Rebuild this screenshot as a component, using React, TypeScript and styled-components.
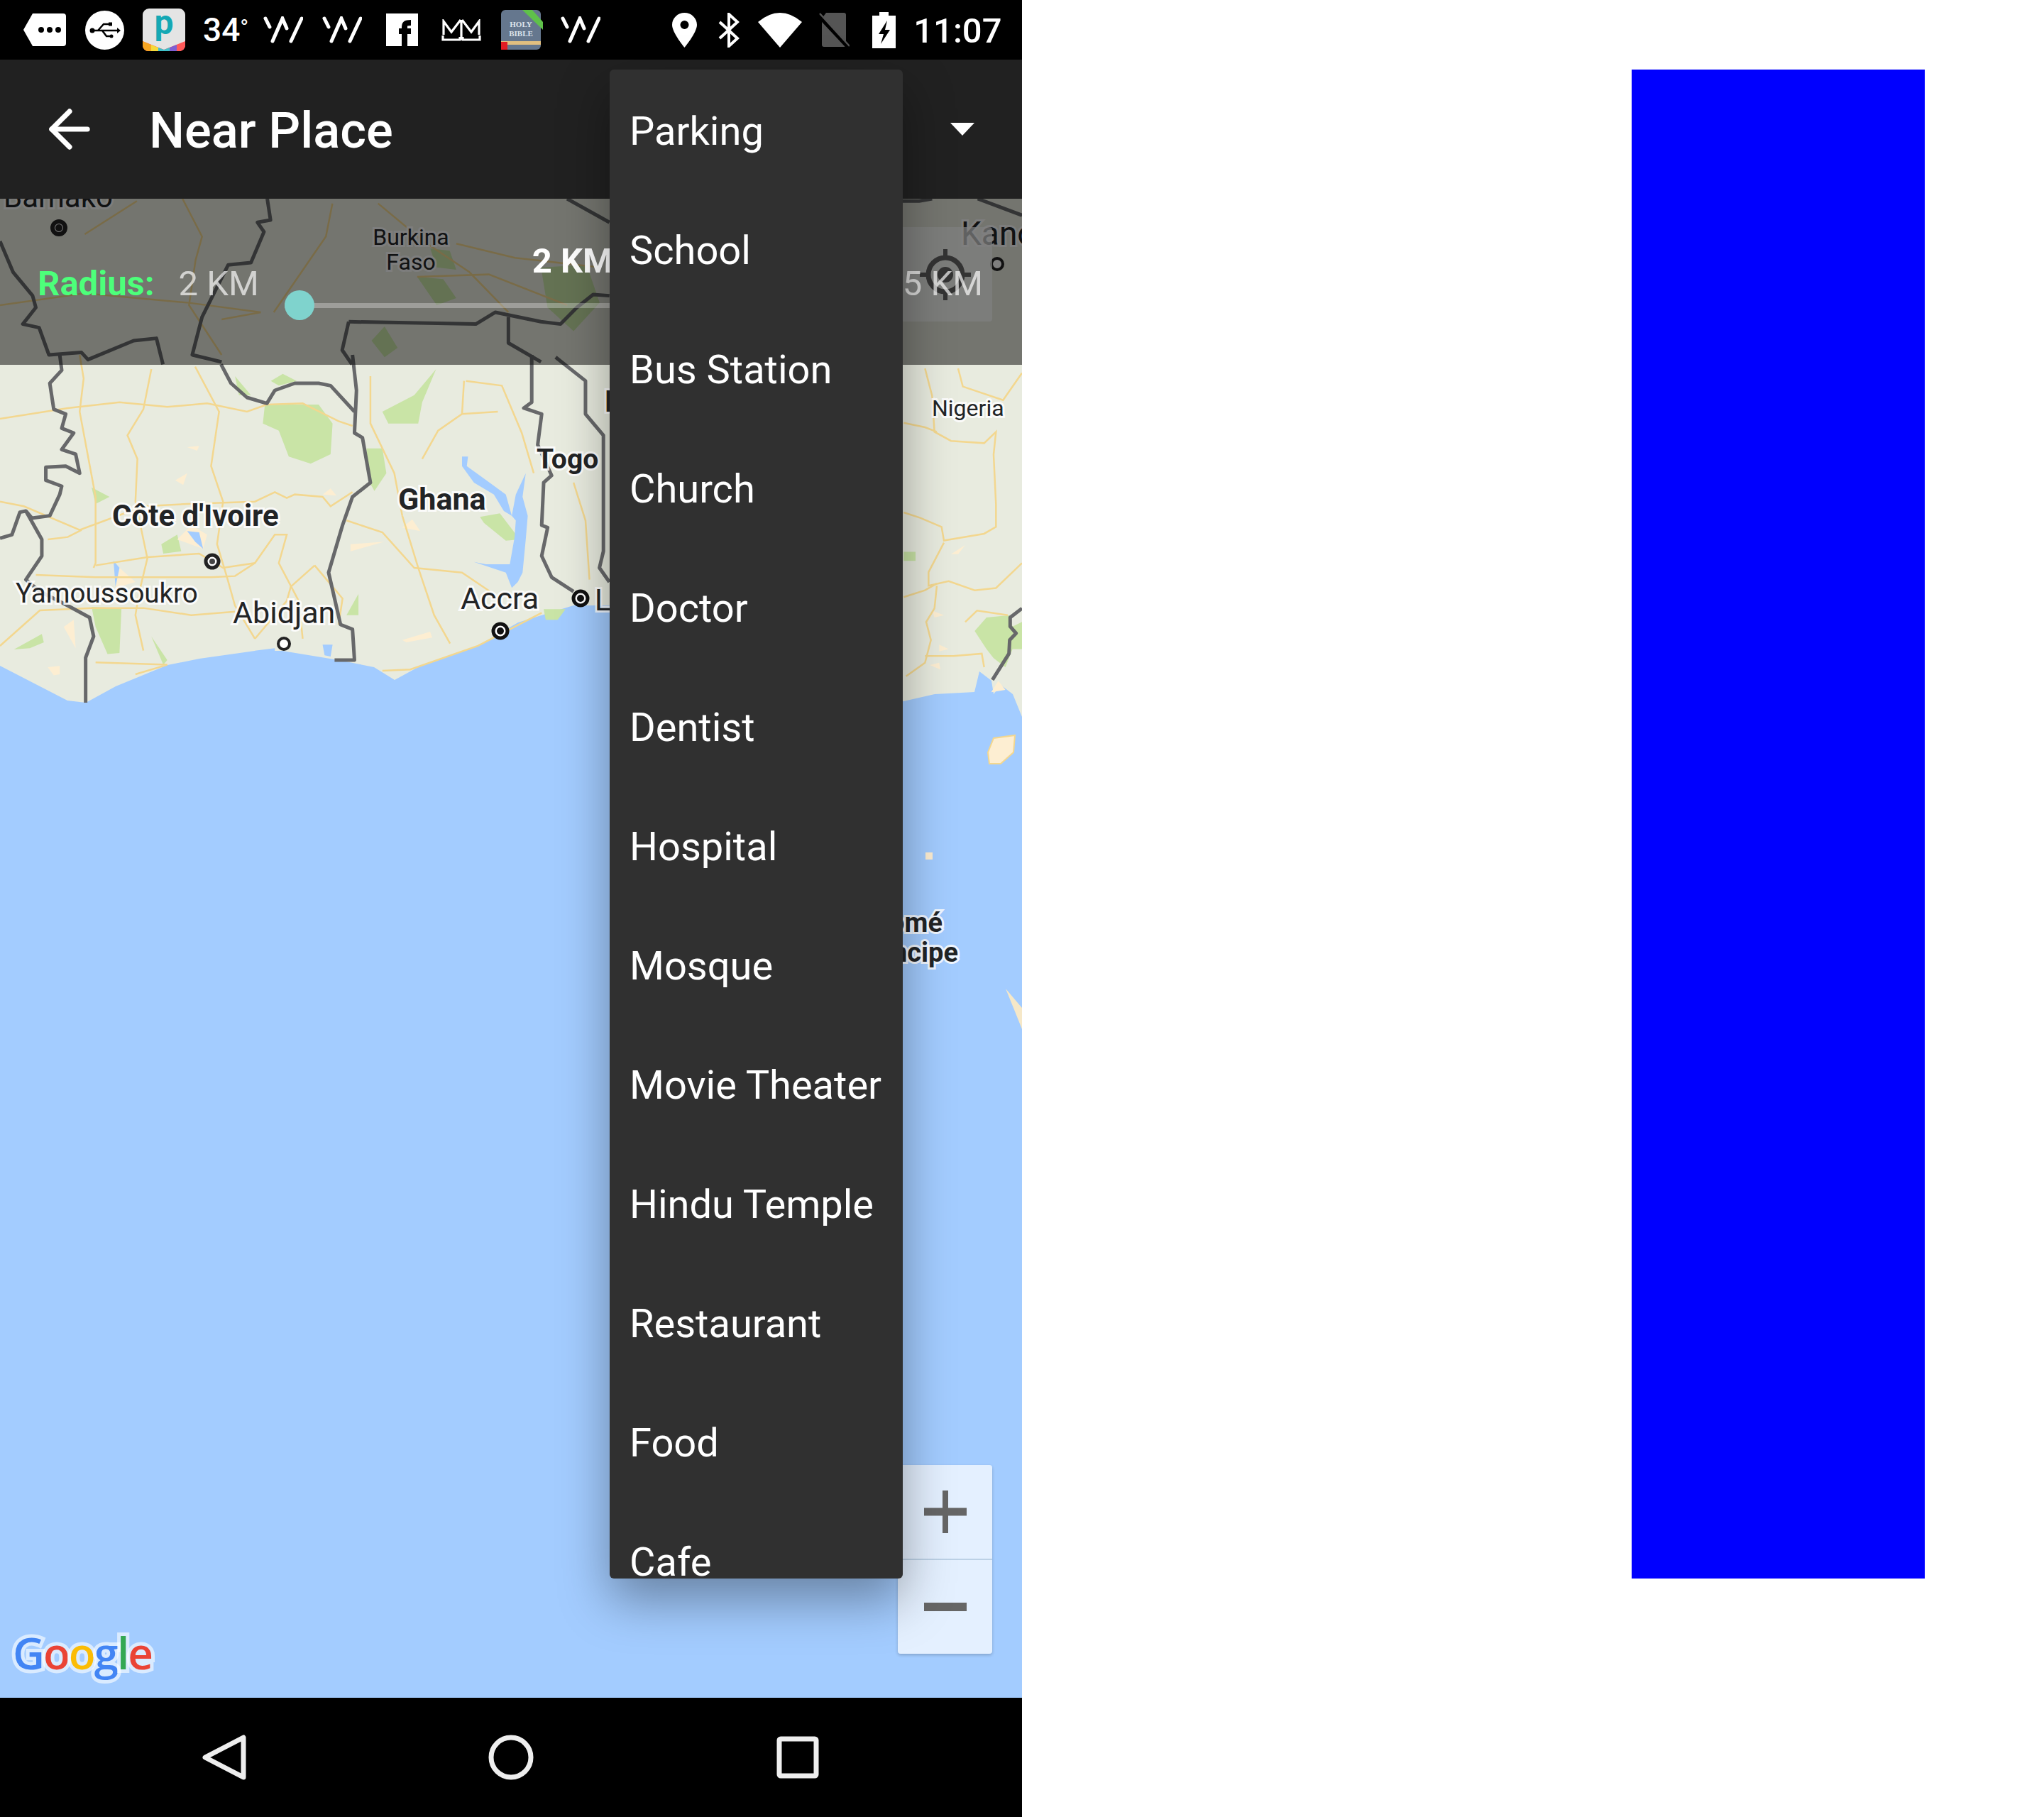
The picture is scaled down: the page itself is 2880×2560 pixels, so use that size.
import React from "react";
import styled, { createGlobalStyle } from "styled-components";
import { ArrowLeft } from "lucide-react";

const GlobalStyle = createGlobalStyle`
  html, body {
    margin: 0;
    padding: 0;
    background: #ffffff;
    font-family: Roboto, "Liberation Sans", sans-serif;
  }
`;

const Page = styled.div`
  display: flex;
  width: 2880px;
  height: 2560px;
  overflow: hidden;
  background: #ffffff;
`;

const Phone = styled.div`
  position: relative;
  display: flex;
  flex-direction: column;
  width: 1440px;
  height: 2560px;
  overflow: hidden;
`;

const StatusBar = styled.div`
  display: flex;
  align-items: center;
  height: 84px;
  flex: none;
  background: #000000;
  color: #ffffff;
`;

const Slot = styled.div<{ $left: number }>`
  display: flex;
  flex: none;
  margin-left: ${(p) => p.$left}px;
`;

const StatusText = styled.span<{ $left: number; $size: number; $weight: number }>`
  margin-left: ${(p) => p.$left}px;
  padding-top: 4px;
  font-size: ${(p) => p.$size}px;
  font-weight: ${(p) => p.$weight};
  line-height: 80px;
  white-space: nowrap;
`;

const Degree = styled.span`
  position: relative;
  top: -8px;
  font-size: 32px;
  font-weight: 400;
`;

const AppBar = styled.div`
  display: flex;
  align-items: center;
  flex: none;
  height: 196px;
  padding: 0 67px 0 55px;
  background: #212121;
  color: #ffffff;
`;

const Title = styled.h1`
  flex: 1;
  margin: 4px 0 0 69px;
  font-size: 70.5px;
  font-weight: 500;
  line-height: 192px;
`;

const Caret = styled.div`
  width: 0;
  height: 0;
  border-left: 17px solid transparent;
  border-right: 17px solid transparent;
  border-top: 18px solid #ffffff;
`;

const MapArea = styled.div`
  position: relative;
  flex: 1;
  background: #a3ccff;
`;

const MapSvg = styled.svg`
  display: block;
  width: 1440px;
  height: 2112px;
`;

const Road = styled.polyline`
  fill: none;
  stroke: #f3d78f;
  stroke-width: 2.5;
  vector-effect: non-scaling-stroke;
`;

const Border = styled.polyline`
  fill: none;
  stroke: #67686a;
  stroke-width: 5;
  stroke-linejoin: round;
  vector-effect: non-scaling-stroke;
`;

const Park = styled.polygon`
  fill: #c9e4a6;
`;

const Patch = styled.polygon`
  fill: #fdeed2;
`;

const Lake = styled.polygon`
  fill: #a3ccff;
`;

const MapLabel = styled.text<{ $size: number; $bold?: boolean }>`
  font-family: Roboto, "Liberation Sans", sans-serif;
  font-size: ${(p) => p.$size}px;
  font-weight: ${(p) => (p.$bold ? 700 : 400)};
  fill: #222426;
  stroke: rgba(255, 255, 255, 0.85);
  stroke-width: 6px;
  paint-order: stroke;
`;

const GoogleMark = styled.text`
  font-family: "Open Sans", Roboto, sans-serif;
  font-size: 62px;
  font-weight: 600;
  letter-spacing: -2px;
  stroke: rgba(255, 255, 255, 0.6);
  stroke-width: 10px;
  paint-order: stroke;
`;

const LocateButton = styled.div`
  position: absolute;
  top: 40px;
  right: 42px;
  display: flex;
  align-items: center;
  justify-content: center;
  width: 133px;
  height: 133px;
  border-radius: 4px;
  background: rgba(255, 255, 255, 0.72);
`;

const ZoomControl = styled.div`
  position: absolute;
  right: 42px;
  bottom: 62px;
  display: flex;
  flex-direction: column;
  width: 133px;
  height: 266px;
  border-radius: 4px;
  background: rgba(255, 255, 255, 0.7);
  box-shadow: 0 2px 4px rgba(0, 0, 0, 0.2);
`;

const ZoomButton = styled.div<{ $divider?: boolean }>`
  display: flex;
  flex: 1;
  align-items: center;
  justify-content: center;
  border-bottom: ${(p) => (p.$divider ? "2px solid rgba(140, 170, 200, 0.45)" : "none")};
`;

const RadiusPanel = styled.div`
  position: absolute;
  top: 0;
  left: 0;
  right: 0;
  display: flex;
  align-items: flex-start;
  height: 234px;
  padding: 0 55px 0 53px;
  box-sizing: border-box;
  background: rgba(0, 0, 0, 0.5);
`;

const RadiusLabel = styled.span`
  margin-top: 90px;
  color: #4dff7a;
  font-size: 49px;
  font-weight: 700;
  line-height: 60px;
`;

const RadiusValue = styled.span<{ $left: number }>`
  margin: 90px 0 0 ${(p) => p.$left}px;
  color: rgba(255, 255, 255, 0.68);
  font-size: 49px;
  line-height: 60px;
  white-space: nowrap;
`;

const Slider = styled.div`
  display: flex;
  flex: 1;
  flex-direction: column;
  align-items: center;
  margin: 58px 59px 0 36px;
`;

const SliderValue = styled.span`
  color: #ffffff;
  font-size: 49px;
  font-weight: 700;
  line-height: 60px;
  white-space: nowrap;
`;

const SliderTrack = styled.div`
  position: relative;
  align-self: stretch;
  height: 7px;
  margin-top: 29px;
  background: rgba(255, 255, 255, 0.3);
`;

const SliderThumb = styled.div`
  position: absolute;
  top: -18px;
  left: 0;
  width: 42px;
  height: 42px;
  border-radius: 50%;
  background: #7fd3cd;
`;

const NavBar = styled.div`
  display: flex;
  align-items: center;
  justify-content: center;
  gap: 340px;
  flex: none;
  height: 168px;
  background: #000000;
`;

const NavIcon = styled.svg`
  display: block;
  width: 64px;
  height: 64px;
  fill: none;
  stroke: #eeeeee;
  stroke-width: 7;
  stroke-linejoin: round;
`;

const Menu = styled.div`
  position: absolute;
  top: 98px;
  left: 859px;
  width: 413px;
  height: 2126px;
  padding-top: 3px;
  box-sizing: border-box;
  overflow: hidden;
  border-radius: 6px;
  background: #303030;
  box-shadow: 0 30px 70px rgba(0, 0, 0, 0.36);
`;

const MenuItem = styled.div`
  flex: none;
  height: 168px;
  padding-left: 28px;
  color: #ffffff;
  font-size: 56px;
  line-height: 168px;
  white-space: nowrap;
`;

const RightSide = styled.div`
  flex: 1;
  padding: 98px 0 0 859px;
  box-sizing: border-box;
`;

const BlueBlock = styled.div`
  width: 413px;
  height: 2126px;
  background: #0000ff;
`;

const items = [
  "Parking",
  "School",
  "Bus Station",
  "Church",
  "Doctor",
  "Dentist",
  "Hospital",
  "Mosque",
  "Movie Theater",
  "Hindu Temple",
  "Restaurant",
  "Food",
  "Cafe",
];

// map shapes are traced per zoom crop, each group has its own scale
const roadsWest = [
  "200,0 210,100 200,240 220,420 240,600 240,880 235,900",
  "0,270 170,225 300,200 420,220 520,205 620,240 670,210 760,205 850,280 885,300",
  "380,60 360,230 320,340 345,440 340,620 370,860 350,1000 340,1100 360,1250",
  "490,50 550,240 530,470 560,620 545,800 570,940 590,1060 640,1200",
  "0,620 60,640 200,740 280,690 360,640 470,630 640,620 690,580 720,605 740,590 810,600 830,640 885,580",
  "120,780 170,770 205,740",
  "240,890 370,855 500,840 560,900 640,880 690,760 720,760 700,880 750,1040 760,1200",
  "90,930 240,940 530,940 590,935 640,880",
  "0,1230 100,1080 230,1070 360,1070 480,1100 590,1085",
  "240,1300 420,1310 340,1350",
  "790,890 730,980 720,1040 640,1200",
  "790,890 860,1030 850,1140",
  "870,700 960,750 1040,900 1160,920 1230,1000",
  "1010,680 1050,900 1090,1100 1130,1220",
  "1060,440 1100,320 1160,250 1250,240",
  "1170,110 1260,130 1310,330 1340,500",
  "1165,110 1160,250",
  "930,90 930,290 990,500 1010,680",
  "960,1335 1030,1330 1200,1230 1360,1090",
  "1440,540 1470,700 1480,950",
];

const roadsEast = [
  "190,30 220,90 230,170 300,190 440,195 490,170 480,220 490,330 490,380 440,395 270,410 260,380 170,360 100,348",
  "270,415 205,480 205,510 290,500 400,520 490,515 600,460",
  "240,510 230,560 195,590 215,630 190,680 110,710",
  "100,535 190,520 240,505",
  "100,150 190,160 240,170",
  "360,590 410,565 540,575",
  "190,665 310,665 430,660 440,690",
  "330,30 350,70 520,100 600,40",
];

const roadsNorth = [
  "280,840 310,1000 300,1100 290,1290 340,1500",
  "130,990 210,850",
  "0,1290 130,1240 290,1280 400,1320",
  "510,860 500,1000 420,1320",
  "700,1030 790,1090 920,1130",
  "580,860 650,1020 720,1150 780,1320",
  "640,1170 750,1160 870,1290",
  "340,1350 400,1320",
];

const Icons = {
  Chat: () => (
    <svg width="60" height="46" viewBox="0 0 60 46">
      <path d="M13 0H56a4 4 0 0 1 4 4V42a4 4 0 0 1-4 4H13L0 23Z" fill="#fff" />
      <circle cx="25" cy="23" r="4" fill="#000" />
      <circle cx="37" cy="23" r="4" fill="#000" />
      <circle cx="49" cy="23" r="4" fill="#000" />
    </svg>
  ),
  Usb: () => (
    <svg width="59" height="55" viewBox="0 0 59 55">
      <circle cx="29.5" cy="27.5" r="27.5" fill="#fff" />
      <path d="M11 28H48M20 28L28 19H35M26 28L32 36H37" stroke="#000" strokeWidth="2.5" fill="none" />
      <circle cx="12" cy="28" r="3.5" fill="#000" />
      <path d="M47 24L52 28L47 32Z" fill="#000" />
      <rect x="35" y="16.5" width="5" height="5" fill="#000" />
      <circle cx="39" cy="36" r="2.5" fill="#000" />
    </svg>
  ),
  Pocket: () => (
    <svg width="60" height="60" viewBox="0 0 60 60">
      <rect width="60" height="60" rx="9" fill="#e4e4e4" />
      <path d="M0 46L30 58L60 46V52a8 8 0 0 1-8 8H8a8 8 0 0 1-8-8Z" fill="#ff5a5a" />
      <path d="M0 46L12 51V60H8a8 8 0 0 1-8-8Z" fill="#f6a623" />
      <path d="M12 51L22 55V60H12Z" fill="#f5d93a" />
      <path d="M22 55L30 58L38 55V60H22Z" fill="#3fc1c9" />
      <path d="M38 55L48 51V60H38Z" fill="#7d5fd3" />
      <text x="30" y="36" textAnchor="middle" fontFamily="Roboto" fontSize="48" fontWeight="700" fill="#14a8b4">
        p
      </text>
    </svg>
  ),
  Wave: () => (
    <svg width="56" height="38" viewBox="0 0 56 38">
      <path d="M3 3L9 15M13 35L27 3L33 17M39 35L54 3" stroke="#fff" strokeWidth="5" strokeLinecap="round" fill="none" />
    </svg>
  ),
  Facebook: () => (
    <svg width="45" height="46" viewBox="0 0 45 46">
      <rect width="45" height="46" fill="#fff" />
      <path d="M26 46V19C26 14 28 13 35 13M18 25H35" stroke="#000" strokeWidth="8" fill="none" />
    </svg>
  ),
  Crown: () => (
    <svg width="56" height="31" viewBox="0 0 56 31">
      <path d="M3 22V3L14 18L27 1M29 1L42 18L53 3V22M2 23V29H26V25M54 23V29H30V25M28 1V29" stroke="#fff" strokeWidth="3.2" fill="none" />
    </svg>
  ),
  Bible: () => (
    <svg width="59" height="56" viewBox="0 0 59 56">
      <rect width="56" height="56" rx="6" fill="#65778e" />
      <rect x="0" y="44" width="56" height="5" fill="#e1bf80" />
      <rect x="0" y="45" width="9" height="11" fill="#e01c24" />
      <text x="28" y="24" textAnchor="middle" fontFamily="Liberation Serif" fontSize="11" fontWeight="700" fill="#dde3ea">
        HOLY
      </text>
      <text x="28" y="37" textAnchor="middle" fontFamily="Liberation Serif" fontSize="11" fontWeight="700" fill="#dde3ea">
        BIBLE
      </text>
      <path d="M30 0H44L59 17V28Z" fill="#5fc14a" />
    </svg>
  ),
  Pin: () => (
    <svg width="35" height="49" viewBox="0 0 35 49">
      <path
        fillRule="evenodd"
        d="M17.5 0C8 0 0 7.5 0 17C0 28 17.5 49 17.5 49S35 28 35 17C35 7.5 27 0 17.5 0ZM17.5 11a6 6 0 1 1 0 12a6 6 0 0 1 0-12Z"
        fill="#fff"
      />
    </svg>
  ),
  Bluetooth: () => (
    <svg width="30" height="49" viewBox="0 0 30 49">
      <path d="M2 13L27 36L15 47V2L27 13L2 36" stroke="#fff" strokeWidth="4" fill="none" />
    </svg>
  ),
  Wifi: () => (
    <svg width="62" height="49" viewBox="0 0 62 49">
      <path d="M0 13Q31 -13 62 13L31 49Z" fill="#fff" />
    </svg>
  ),
  NoSim: () => (
    <svg width="45" height="48" viewBox="0 0 45 48">
      <path d="M12 0H37a3 3 0 0 1 3 3V45a3 3 0 0 1-3 3H9a3 3 0 0 1-3-3V8Z" fill="#555" />
      <path d="M0 2L42 47" stroke="#000" strokeWidth="6" />
      <path d="M3 1L45 47" stroke="#555" strokeWidth="2.5" />
    </svg>
  ),
  Battery: () => (
    <svg width="33" height="51" viewBox="0 0 33 51">
      <path d="M10 0H23V5H33V51H0V5H10Z" fill="#fff" />
      <path d="M21 12L9 31H16L12 45L25 25H18Z" fill="#000" />
    </svg>
  ),
};

const App = () => {
  return (
    <Page>
      <GlobalStyle />
      <Phone>
        <StatusBar>
          <Slot $left={33}>
            <Icons.Chat />
          </Slot>
          <Slot $left={25}>
            <Icons.Usb />
          </Slot>
          <Slot $left={24}>
            <Icons.Pocket />
          </Slot>
          <StatusText $left={25} $size={46} $weight={500}>
            34<Degree>°</Degree>
          </StatusText>
          <Slot $left={21}>
            <Icons.Wave />
          </Slot>
          <Slot $left={27}>
            <Icons.Wave />
          </Slot>
          <Slot $left={34}>
            <Icons.Facebook />
          </Slot>
          <Slot $left={33}>
            <Icons.Crown />
          </Slot>
          <Slot $left={28}>
            <Icons.Bible />
          </Slot>
          <Slot $left={25}>
            <Icons.Wave />
          </Slot>
          <Slot $left={101}>
            <Icons.Pin />
          </Slot>
          <Slot $left={30}>
            <Icons.Bluetooth />
          </Slot>
          <Slot $left={26}>
            <Icons.Wifi />
          </Slot>
          <Slot $left={22}>
            <Icons.NoSim />
          </Slot>
          <Slot $left={32}>
            <Icons.Battery />
          </Slot>
          <StatusText $left={25} $size={49} $weight={500}>
            11:07
          </StatusText>
        </StatusBar>

        <AppBar>
          <ArrowLeft size={86} color="#ffffff" strokeWidth={2} />
          <Title>Near Place</Title>
          <Caret />
        </AppBar>

        <MapArea>
          <MapSvg viewBox="0 280 1440 2112">
            <polygon
              fill="#e8ebdf"
              points="0,280 1440,280 1440,1010 1427,978 1410,965 1400,978 1397,959 1380,946 1373,975 1317,978 1273,988 1100,950 859,853 808,853 769,865 730,877 673,910 589,940 556,958 527,940 477,930 398,917 359,917 281,928 236,937 163,967 121,990 95,987 0,938"
            />
            <polygon
              fill="#fdeed2"
              stroke="#f3d78f"
              strokeWidth="2"
              points="1392,1060 1400,1040 1430,1036 1428,1060 1410,1076 1394,1076"
            />
            <polygon fill="#fdeed2" points="1304,1201 1314,1201 1314,1211 1304,1211" />
            <polygon fill="#f6e8c8" points="1417,1393 1440,1420 1440,1450 1430,1425" />

            {/* Ivory Coast, Ghana, Togo */}
            <g transform="translate(0,500) scale(0.5612,0.3333)">
              <Park points="665,210 800,210 835,290 830,420 780,460 725,430 700,320 660,290" />
              <Park points="960,240 1040,170 1095,60 1060,200 1050,290 975,290" />
              <Park points="920,395 960,395 970,500 940,575 925,530" />
              <Park points="590,90 630,170 600,170" />
              <Park points="680,110 710,80 745,110 700,130" />
              <Park points="230,560 275,600 240,630" />
              <Park points="405,800 445,760 455,830 410,840" />
              <Park points="230,1065 305,1070 300,1260 270,1265 240,1150" />
              <Park points="35,1245 105,1180 110,1215 75,1240" />
              <Park points="1205,685 1255,670 1305,780 1270,785 1215,710" />
              <Park points="380,1190 420,1290 410,1310" />
              <Park points="870,1100 900,1010 900,1100" />
              <Park points="1365,1075 1420,1075 1400,1120 1370,1120" />
              <Patch points="440,530 470,500 460,550" />
              <Patch points="470,390 500,385 495,405" />
              <Patch points="445,780 480,720 520,760 510,820" />
              <Patch points="810,590 830,565 845,595" />
              <Patch points="1010,730 1035,695 1055,745" />
              <Patch points="880,800 965,790 880,830" />
              <Patch points="1010,1205 1080,1170 1085,1195 1020,1215" />
              <Patch points="120,1320 150,1315 150,1350 135,1355" />
              <Patch points="160,1150 185,1120 190,1240" />
              <Patch points="300,900 340,960 290,985" />
              <Lake points="1160,430 1175,430 1172,470 1225,535 1270,590 1285,680 1265,660 1240,590 1190,540 1160,470" />
              <Lake points="1320,500 1312,600 1325,680 1320,780 1312,920 1300,960 1285,985 1270,920 1190,875 1220,885 1280,885 1292,770 1295,700 1285,680 1295,590" />
              <Lake points="470,745 500,750 510,820 490,790" />
              <Lake points="285,870 300,900 290,980" />
              <Lake points="810,1225 835,1225 830,1275 815,1270" />
              <Lake points="640,1250 690,1240 690,1255 640,1265" />
              {roadsWest.map((pts) => (
                <Road key={pts} points={pts} />
              ))}
              <Border points="150,0 155,65 125,120 135,230 165,250 155,310 185,330 155,400 190,420 200,500 165,470 115,475 115,530 155,555 150,590 125,680 80,690 65,660 50,665 30,760 0,775" />
              <Border points="65,660 105,780 105,850 65,950 100,1000 170,1060 225,1110 235,1190 215,1280 215,1470" />
              <Border points="555,40 580,120 620,180 670,205 690,150 740,120 800,120 830,130 890,240" />
              <Border points="885,0 895,150 890,330 910,350 930,540 885,600 860,720 825,920 855,1140 885,1160 890,1290 840,1290" />
              <Border points="1335,0 1335,200 1315,225 1360,250 1350,380 1385,510 1365,540 1360,720 1375,730 1360,850 1385,940 1440,1000" />
              <Border points="1395,10 1470,110 1470,250 1515,340 1515,830 1505,900 1530,960" />
            </g>

            {/* strip under the radius panel */}
            <g transform="scale(0.9184,0.3333)">
              <Park points="830,1130 900,1120 920,1280 880,1400 840,1300" />
              <Park points="640,1170 680,1180 700,1260 670,1290" />
              <Park points="570,1440 590,1380 610,1470 590,1510" />
              <Park points="660,1050 690,1060 700,1140 670,1130" />
              {roadsNorth.map((pts) => (
                <Road key={pts} points={pts} />
              ))}
              <Border points="410,840 415,930 395,940 405,980 385,1110 350,1120 310,1340 295,1500 340,1530" />
              <Border points="0,1020 20,1150 50,1250 55,1300 35,1370 60,1385 75,1500 125,1490 135,1520 205,1440 240,1430 250,1540" />
              <Border points="535,1360 730,1370 760,1320 830,1360 860,1370 885,1300 910,1245 935,1250" />
              <Border points="535,1360 525,1480 540,1540" />
              <Border points="780,1340 780,1450 830,1530" />
              <Border points="870,840 935,940" />
              <Border points="1385,850 1410,850 1430,840" />
              <Border points="1500,840 1568,910" />
            </g>

            {/* Nigeria side */}
            <g transform="translate(1240,500) scale(0.3333,0.6378)">
              <Park points="400,610 450,580 550,575 560,600 600,590 600,650 560,650 530,690 480,670 450,650" />
              <Park points="100,435 150,435 150,455 100,455" />
              <Patch points="300,440 360,420 330,440" />
              <Patch points="220,565 270,575 230,580" />
              <Patch points="250,640 290,650 250,655" />
              <Patch points="210,685 250,680 255,695" />
              <Patch points="470,745 500,720 530,740" />
              {roadsEast.map((pts) => (
                <Road key={pts} points={pts} />
              ))}
              <Border points="600,560 550,580 550,600 575,615 548,630 545,660 475,718" />
            </g>

            <circle cx="83" cy="321" r="9" fill="#fff" stroke="#222" strokeWidth="6" />
            <circle cx="83" cy="321" r="5" fill="#222" />
            <circle cx="299" cy="791" r="9" fill="#fff" stroke="#222" strokeWidth="5" />
            <circle cx="299" cy="791" r="4" fill="#444" />
            <circle cx="400" cy="907" r="8" fill="#fff" stroke="#222" strokeWidth="4" />
            <circle cx="705" cy="889" r="10" fill="#fff" stroke="#111" strokeWidth="5" />
            <circle cx="705" cy="889" r="5" fill="#111" />
            <circle cx="818" cy="843" r="10" fill="#fff" stroke="#111" strokeWidth="5" />
            <circle cx="818" cy="843" r="5" fill="#111" />
            <circle cx="1405" cy="372" r="8" fill="#fff" stroke="#222" strokeWidth="4" />

            <MapLabel x={5} y={292} $size={42}>Bamako</MapLabel>
            <MapLabel x={579} y={345} $size={32} textAnchor="middle">Burkina</MapLabel>
            <MapLabel x={579} y={380} $size={32} textAnchor="middle">Faso</MapLabel>
            <MapLabel x={1354} y={345} $size={46}>Kano</MapLabel>
            <MapLabel x={1313} y={586} $size={32}>Nigeria</MapLabel>
            <MapLabel x={852} y={580} $size={42} $bold>Benin</MapLabel>
            <MapLabel x={158} y={741} $size={42} $bold>Côte d'Ivoire</MapLabel>
            <MapLabel x={561} y={718} $size={43} $bold>Ghana</MapLabel>
            <MapLabel x={756} y={660} $size={39} $bold>Togo</MapLabel>
            <MapLabel x={22} y={849} $size={38.5}>Yamoussoukro</MapLabel>
            <MapLabel x={328} y={878} $size={43}>Abidjan</MapLabel>
            <MapLabel x={649} y={858} $size={43}>Accra</MapLabel>
            <MapLabel x={838} y={860} $size={42}>Lagos</MapLabel>
            <MapLabel x={1328} y={1313} $size={38} $bold textAnchor="end">São Tomé</MapLabel>
            <MapLabel x={1350} y={1355} $size={38} $bold textAnchor="end">Príncipe</MapLabel>

            <GoogleMark x={18} y={2352}>
              <tspan fill="#4285f4">G</tspan>
              <tspan fill="#ea4335">o</tspan>
              <tspan fill="#fbbc05">o</tspan>
              <tspan fill="#4285f4">g</tspan>
              <tspan fill="#34a853">l</tspan>
              <tspan fill="#ea4335">e</tspan>
            </GoogleMark>
          </MapSvg>

          <LocateButton>
            <svg width="76" height="76" viewBox="0 0 76 76">
              <circle cx="38" cy="38" r="24" fill="none" stroke="#666" strokeWidth="7" />
              <circle cx="38" cy="38" r="11" fill="#666" />
              <path d="M38 2V14M38 62V74M2 38H14M62 38H74" stroke="#666" strokeWidth="6" />
            </svg>
          </LocateButton>

          <RadiusPanel>
            <RadiusLabel>Radius:</RadiusLabel>
            <RadiusValue $left={34}>2 KM</RadiusValue>
            <Slider>
              <SliderValue>2 KM</SliderValue>
              <SliderTrack>
                <SliderThumb />
              </SliderTrack>
            </Slider>
            <RadiusValue $left={0}>5 KM</RadiusValue>
          </RadiusPanel>

          <ZoomControl>
            <ZoomButton $divider>
              <svg width="60" height="60" viewBox="0 0 60 60">
                <path d="M30 0V60" stroke="#666" strokeWidth="8" />
                <path d="M0 30H60" stroke="#666" strokeWidth="11" />
              </svg>
            </ZoomButton>
            <ZoomButton>
              <svg width="60" height="12" viewBox="0 0 60 12">
                <rect width="60" height="12" fill="#666" />
              </svg>
            </ZoomButton>
          </ZoomControl>
        </MapArea>

        <NavBar>
          <NavIcon viewBox="0 0 64 64">
            <path d="M59 4V60L5 32Z" />
          </NavIcon>
          <NavIcon viewBox="0 0 64 64">
            <circle cx="32" cy="32" r="28" />
          </NavIcon>
          <NavIcon viewBox="0 0 64 64">
            <rect x="6" y="6" width="52" height="52" rx="2" />
          </NavIcon>
        </NavBar>

        <Menu>
          {items.map((item) => (
            <MenuItem key={item}>{item}</MenuItem>
          ))}
        </Menu>
      </Phone>

      <RightSide>
        <BlueBlock />
      </RightSide>
    </Page>
  );
};

export default App;
